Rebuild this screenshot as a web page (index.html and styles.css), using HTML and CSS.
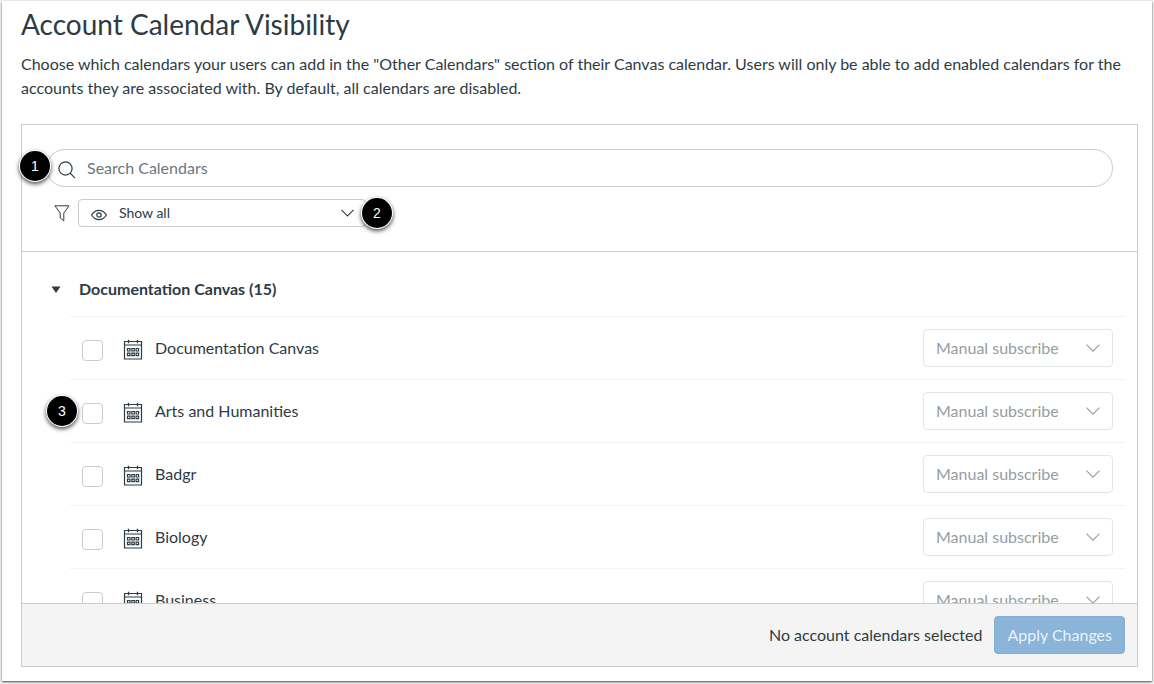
FILE: index.html
```html
<!DOCTYPE html>
<html lang="en">
<head>
<meta charset="utf-8">
<meta name="viewport" content="width=device-width, initial-scale=1">
<title>Account Calendar Visibility</title>
<link rel="stylesheet" href="styles.css">
</head>
<body>
<svg class="sprite" aria-hidden="true">
  <symbol id="chevron" viewBox="0 0 14 8"><path d="M.5.7 7 7.2 13.5.7" fill="none" stroke="currentColor" stroke-width="1.1"/></symbol>
  <symbol id="calendar" viewBox="0 0 20 21">
    <path d="M1.500 2.500h17v17.500h-17zM1.500 6h17" fill="none" stroke="currentColor" stroke-width="1.200"/>
    <path d="M5.500.800v3.400M14.500.800v3.400" fill="none" stroke="currentColor" stroke-width="1.300"/>
    <path d="M4.500 9.500H7V12H4.500zM8.800 9.500h2.500V12H8.800zM13.100 9.500h2.500V12h-2.500zM4.500 14.200H7v2.500H4.500zM8.800 14.200h2.500v2.500H8.800zM13.100 14.200h2.500v2.500h-2.500z" fill="none" stroke="currentColor" stroke-width="1.200"/>
  </symbol>
</svg>
<main class="page">
  <h1 class="title">Account Calendar Visibility</h1>
  <p class="intro">Choose which calendars your users can add in the "Other Calendars" section of their Canvas calendar. Users will only be able to add enabled calendars for the accounts they are associated with. By default, all calendars are disabled.</p>
  <section class="panel">
    <div class="filters">
      <div class="search">
        <svg class="search-icon" viewBox="0 0 18 18" aria-hidden="true"><circle cx="7.5" cy="7.5" r="6.6" fill="none" stroke="currentColor" stroke-width="1.2"/><path d="m12.2 12.2 4.9 4.9" stroke="currentColor" stroke-width="1.2"/></svg>
        <input class="search-input" type="text" placeholder="Search Calendars" aria-label="Search Calendars">
        <span class="badge badge-search">1</span>
      </div>
      <div class="filter-row">
        <svg class="funnel" viewBox="0 0 16 17" aria-hidden="true"><path d="M.9.8h14.200L9.800 8v7.800L6.200 13V8z" fill="none" stroke="currentColor"/></svg>
        <div class="show">
          <svg class="eye" viewBox="0 0 16 12" aria-hidden="true"><path d="M.6 6C4.500-.200 11.500-.200 15.400 6c-3.900 6.200-10.900 6.200-14.800 0z" fill="none" stroke="currentColor" stroke-width="1.200"/><circle cx="8" cy="6" r="2.200" fill="none" stroke="currentColor" stroke-width="1.200"/></svg>
          <select class="show-select" aria-label="Filter calendars"><option>Show all</option></select>
          <svg class="chevron show-chevron" aria-hidden="true"><use href="#chevron"/></svg>
          <span class="badge badge-show">2</span>
        </div>
      </div>
    </div>
    <div class="list">
      <button class="group" type="button" aria-expanded="true"><svg class="triangle" viewBox="0 0 10 7" aria-hidden="true"><path d="M.5.500h9L5 7z" fill="currentColor"/></svg>Documentation Canvas (15)</button>
      <ul class="rows">
        <li class="row">
          <input class="check" type="checkbox" id="c1"><label class="name" for="c1"><svg class="calendar" aria-hidden="true"><use href="#calendar"/></svg>Documentation Canvas</label>
          <div class="subscribe"><select class="subscribe-select" disabled aria-label="Subscription type for Documentation Canvas"><option>Manual subscribe</option></select><svg class="chevron" aria-hidden="true"><use href="#chevron"/></svg></div>
        </li>
        <li class="row">
          <span class="badge badge-row">3</span>
          <input class="check" type="checkbox" id="c2"><label class="name" for="c2"><svg class="calendar" aria-hidden="true"><use href="#calendar"/></svg>Arts and Humanities</label>
          <div class="subscribe"><select class="subscribe-select" disabled aria-label="Subscription type for Arts and Humanities"><option>Manual subscribe</option></select><svg class="chevron" aria-hidden="true"><use href="#chevron"/></svg></div>
        </li>
        <li class="row">
          <input class="check" type="checkbox" id="c3"><label class="name" for="c3"><svg class="calendar" aria-hidden="true"><use href="#calendar"/></svg>Badgr</label>
          <div class="subscribe"><select class="subscribe-select" disabled aria-label="Subscription type for Badgr"><option>Manual subscribe</option></select><svg class="chevron" aria-hidden="true"><use href="#chevron"/></svg></div>
        </li>
        <li class="row">
          <input class="check" type="checkbox" id="c4"><label class="name" for="c4"><svg class="calendar" aria-hidden="true"><use href="#calendar"/></svg>Biology</label>
          <div class="subscribe"><select class="subscribe-select" disabled aria-label="Subscription type for Biology"><option>Manual subscribe</option></select><svg class="chevron" aria-hidden="true"><use href="#chevron"/></svg></div>
        </li>
        <li class="row">
          <input class="check" type="checkbox" id="c5"><label class="name" for="c5"><svg class="calendar" aria-hidden="true"><use href="#calendar"/></svg>Business</label>
          <div class="subscribe"><select class="subscribe-select" disabled aria-label="Subscription type for Business"><option>Manual subscribe</option></select><svg class="chevron" aria-hidden="true"><use href="#chevron"/></svg></div>
        </li>
      </ul>
    </div>
    <footer class="footer">
      <span>No account calendars selected</span>
      <button class="apply" type="button" disabled>Apply Changes</button>
    </footer>
  </section>
</main>
</body>
</html>
```
FILE: styles.css
```css
* {
  box-sizing: border-box;
}

body {
  margin: 0;
  height: 100vh;
  padding: 1px 2px 3px;
  background: #f4f4f4;
  color: #2d3b45;
  font: 16px/24px Lato, "Liberation Sans", sans-serif;
}

button,
input,
select {
  margin: 0;
  font: inherit;
  color: inherit;
}

.sprite {
  position: absolute;
  width: 0;
  height: 0;
}

.page {
  display: flex;
  flex-direction: column;
  height: 100%;
  padding: 5px 14px 14px 19px;
  background: #fff;
  box-shadow: 0 1px 2px rgba(0, 0, 0, 0.7);
}

.title {
  margin: 0 0 10px;
  font-size: 28px;
  line-height: 36px;
  font-weight: 400;
}

.intro {
  margin: 0 0 24px;
}

.panel {
  display: flex;
  flex-direction: column;
  flex: 1;
  min-height: 0;
  border: 1px solid #c7cdd1;
}

.filters {
  display: flex;
  flex-direction: column;
  gap: 12px;
  padding: 24px;
  border-bottom: 1px solid #c7cdd1;
}

.search,
.show,
.subscribe {
  position: relative;
}

.search-input {
  display: block;
  width: 100%;
  height: 38px;
  padding: 0 40px 2px;
  border: 1px solid #c7cdd1;
  border-radius: 19px;
  background: #fff;
}

.search-input::placeholder {
  color: #6b7780;
  opacity: 1;
}

.search-icon {
  position: absolute;
  left: 12px;
  top: 12px;
  width: 18px;
  height: 18px;
}

.filter-row {
  display: flex;
  align-items: center;
  gap: 8px;
  padding-left: 8px;
}

.funnel {
  width: 16px;
  height: 17px;
}

.show-select {
  display: block;
  appearance: none;
  width: 288px;
  height: 28px;
  padding: 0 40px;
  border: 1px solid #c7cdd1;
  border-radius: 4px;
  background: #fff;
  font-size: 14px;
}

.eye {
  position: absolute;
  left: 13px;
  top: 10px;
  width: 16px;
  height: 12px;
}

.chevron {
  position: absolute;
  right: 13px;
  top: 15px;
  width: 14px;
  height: 8px;
  pointer-events: none;
}

.show-chevron {
  right: 12px;
  top: 10px;
  width: 13px;
}

.badge {
  position: absolute;
  width: 30px;
  height: 30px;
  border-radius: 50%;
  background: #000;
  color: #fff;
  box-shadow: 0 0 0 1px #fff, 0 2px 4px 1px rgba(0, 0, 0, 0.7);
  font: 14px/30px "Liberation Sans", sans-serif;
  text-align: center;
}

.badge-search {
  left: -26px;
  top: 2px;
}

.badge-show {
  right: -26px;
  top: -1px;
}

.badge-row {
  left: -23px;
  top: 16px;
}

.list {
  flex: 1;
  min-height: 0;
  overflow: auto;
  scrollbar-width: none;
}

.group {
  display: flex;
  align-items: center;
  gap: 18px;
  width: 100%;
  height: 64px;
  padding: 9px 29px 0;
  border: 0;
  background: none;
  font-weight: 700;
}

.triangle {
  width: 10px;
  height: 7px;
  margin-top: 2px;
}

.rows {
  margin: 0 12px 0 48px;
  padding: 0;
  list-style: none;
}

.row {
  position: relative;
  display: flex;
  align-items: center;
  padding: 12px;
  border-top: 1px solid #f2f3f4;
}

.check {
  appearance: none;
  width: 21px;
  height: 21px;
  margin-top: 4px;
  border: 1px solid #c7cdd1;
  border-radius: 4px;
  background: #fff;
}

.name {
  display: flex;
  align-items: center;
  gap: 12px;
  flex: 1;
  margin-left: 20px;
}

.calendar {
  width: 20px;
  height: 21px;
  margin-top: 3px;
}

.subscribe {
  color: #969da2;
}

.subscribe-select {
  display: block;
  appearance: none;
  width: 190px;
  height: 38px;
  padding: 0 12px;
  border: 1px solid #e3e6e8;
  border-radius: 4px;
  background: #fff;
  opacity: 1;
}

.footer {
  display: flex;
  align-items: center;
  justify-content: flex-end;
  gap: 12px;
  padding: 12px;
  border-top: 1px solid #c7cdd1;
  background: #f4f4f4;
}

.apply {
  height: 38px;
  padding: 0 12px;
  border: 1px solid #85aed0;
  border-radius: 4px;
  background: #8ab4d8;
  color: #eaf3fa;
}
```
